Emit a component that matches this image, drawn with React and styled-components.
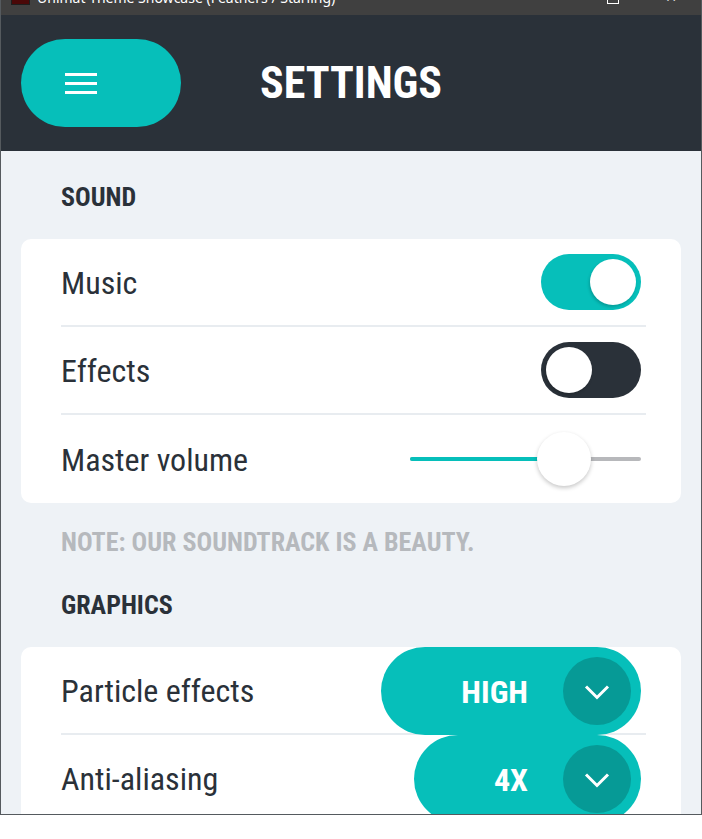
import React from "react";
import styled, { createGlobalStyle } from "styled-components";

const FONT = `"Roboto Condensed", "Liberation Sans Narrow", "DejaVu Sans Condensed", Roboto, sans-serif`;

const GlobalStyle = createGlobalStyle`
  html, body {
    margin: 0;
    padding: 0;
    background: #ffffff;
  }
  * {
    box-sizing: border-box;
  }
`;

const App = () => {
  return (
    <>
      <GlobalStyle />
      <Window>
        <TitleBar>
          <AppIcon />
          <TitleText>Unimat Theme Showcase (Feathers / Starling)</TitleText>
          <WindowButtons>
            <MaxBox />
            <CloseMark>✕</CloseMark>
          </WindowButtons>
        </TitleBar>

        <Header>
          <MenuButton>
            <svg width="32" height="24" viewBox="0 0 32 24">
              <rect x="0" y="2" width="32" height="3" fill="#fff" />
              <rect x="0" y="11" width="32" height="3" fill="#fff" />
              <rect x="0" y="20" width="32" height="3" fill="#fff" />
            </svg>
          </MenuButton>
          <HeaderTitle>SETTINGS</HeaderTitle>
          <span />
        </Header>

        <Content>
          <SectionLabel>SOUND</SectionLabel>
          <Card>
            <Row>
              <RowLabel>Music</RowLabel>
              <Toggle $on>
                <Thumb />
              </Toggle>
            </Row>
            <Row>
              <RowLabel>Effects</RowLabel>
              <Toggle>
                <Thumb />
              </Toggle>
            </Row>
            <Row $last>
              <RowLabel>Master volume</RowLabel>
              <Slider>
                <Track>
                  <Fill style={{ width: "66.7%" }} />
                  <SliderThumb style={{ left: "66.7%" }} />
                </Track>
              </Slider>
            </Row>
          </Card>
          <Note>NOTE: OUR SOUNDTRACK IS A BEAUTY.</Note>

          <SectionLabel $gap={37}>GRAPHICS</SectionLabel>
          <Card>
            <Row>
              <RowLabel>Particle effects</RowLabel>
              <Dropdown>
                <DropdownValue>HIGH</DropdownValue>
                <Chevron />
              </Dropdown>
            </Row>
            <Row>
              <RowLabel>Anti-aliasing</RowLabel>
              <Dropdown>
                <DropdownValue>4X</DropdownValue>
                <Chevron />
              </Dropdown>
            </Row>
          </Card>
        </Content>
      </Window>
    </>
  );
};

const Chevron = () => (
  <ChevronCircle>
    <svg width="26" height="16" viewBox="0 0 26 16">
      <path d="M2 2.5 L13 13.5 L24 2.5" fill="none" stroke="#fff" strokeWidth="3" />
    </svg>
  </ChevronCircle>
);

export default App;

const Window = styled.div`
  width: 702px;
  height: 815px;
  display: flex;
  flex-direction: column;
  border: 1px solid #555a5e;
  border-top: none;
  overflow: hidden;
  background: #eef2f6;
  font-family: ${FONT};
`;

const TitleBar = styled.div`
  height: 15px;
  flex-shrink: 0;
  background: #404040;
  display: flex;
  align-items: flex-end;
  padding-left: 10px;
  overflow: hidden;
`;

const AppIcon = styled.div`
  width: 19px;
  height: 14px;
  margin-bottom: 10px;
  background: #4a0808;
  border: 1px solid #1e1e1e;
  flex-shrink: 0;
`;

const TitleText = styled.div`
  font-family: "Noto Sans", "DejaVu Sans", sans-serif;
  font-size: 14px;
  line-height: 16px;
  color: #ffffff;
  margin-left: 7px;
  margin-bottom: 9px;
  white-space: nowrap;
`;

const WindowButtons = styled.div`
  margin-left: auto;
  display: flex;
  align-items: flex-end;
  gap: 46px;
  padding-right: 24px;
  margin-bottom: 11px;
`;

const MaxBox = styled.div`
  width: 12px;
  height: 12px;
  border: 1px solid #ffffff;
`;

const CloseMark = styled.div`
  color: #ffffff;
  font-size: 14px;
  line-height: 14px;
  font-family: "DejaVu Sans", sans-serif;
`;

const Header = styled.div`
  height: 136px;
  flex-shrink: 0;
  background: #2a3139;
  display: grid;
  grid-template-columns: 1fr auto 1fr;
  align-items: center;
  padding: 0 20px;
`;

const MenuButton = styled.div`
  width: 160px;
  height: 88px;
  border-radius: 44px;
  background: #06bfba;
  display: flex;
  align-items: center;
  padding-left: 44px;
`;

const HeaderTitle = styled.div`
  color: #ffffff;
  font-weight: 700;
  font-size: 44px;
  line-height: 48px;
`;

const Content = styled.div`
  flex: 1;
  padding: 0 20px;
  display: flex;
  flex-direction: column;
`;

const SectionLabel = styled.div`
  margin-top: ${({ $gap }) => $gap ?? 33}px;
  margin-bottom: 29px;
  padding-left: 40px;
  color: #2a3139;
  font-weight: 700;
  font-size: 26px;
  line-height: 26px;
`;

const Note = styled.div`
  margin-top: 26px;
  padding-left: 40px;
  color: #b6b9bd;
  font-weight: 700;
  font-size: 26px;
  line-height: 26px;
`;

const Card = styled.div`
  background: #ffffff;
  border-radius: 10px;
  flex-shrink: 0;
`;

const Row = styled.div`
  height: 88px;
  margin: 0 35px 0 40px;
  display: flex;
  align-items: center;
  justify-content: space-between;
  border-bottom: ${({ $last }) => ($last ? "none" : "2px solid #e8ecf0")};
`;

const RowLabel = styled.div`
  color: #2a3139;
  font-size: 32px;
  line-height: 36px;
  font-weight: 400;
  padding-top: 2px;
`;

const Toggle = styled.div`
  width: 100px;
  height: 56px;
  border-radius: 28px;
  margin-right: 5px;
  padding: 5px;
  display: flex;
  justify-content: ${({ $on }) => ($on ? "flex-end" : "flex-start")};
  background: ${({ $on }) => ($on ? "#06bfba" : "#2a3139")};
`;

const Thumb = styled.div`
  width: 46px;
  height: 46px;
  border-radius: 50%;
  background: #ffffff;
  box-shadow: -1px 2px 3px rgba(0, 0, 0, 0.18);
`;

const Slider = styled.div`
  width: 231px;
  height: 56px;
  margin-right: 5px;
  display: flex;
  align-items: center;
`;

const Track = styled.div`
  position: relative;
  width: 100%;
  height: 4px;
  border-radius: 2px;
  background: #b7b8bb;
`;

const Fill = styled.div`
  height: 100%;
  border-radius: 2px;
  background: #06bfba;
`;

const SliderThumb = styled.div`
  position: absolute;
  top: 50%;
  width: 54px;
  height: 54px;
  margin-left: -27px;
  margin-top: -27px;
  border-radius: 50%;
  background: #ffffff;
  box-shadow: 0 2px 4px rgba(0, 0, 0, 0.22);
`;

const Dropdown = styled.div`
  align-self: flex-start;
  height: 88px;
  margin-bottom: -2px;
  margin-right: 5px;
  border-radius: 44px;
  background: #06bfba;
  display: flex;
  align-items: center;
  padding: 0 10px 0 80px;
  gap: 35px;
  position: relative;
`;

const DropdownValue = styled.div`
  color: #ffffff;
  font-weight: 700;
  font-size: 32px;
  line-height: 36px;
  padding-top: 2px;
`;

const ChevronCircle = styled.div`
  width: 68px;
  height: 68px;
  border-radius: 50%;
  background: #069a96;
  display: flex;
  align-items: center;
  justify-content: center;
  padding-top: 2px;
`;
